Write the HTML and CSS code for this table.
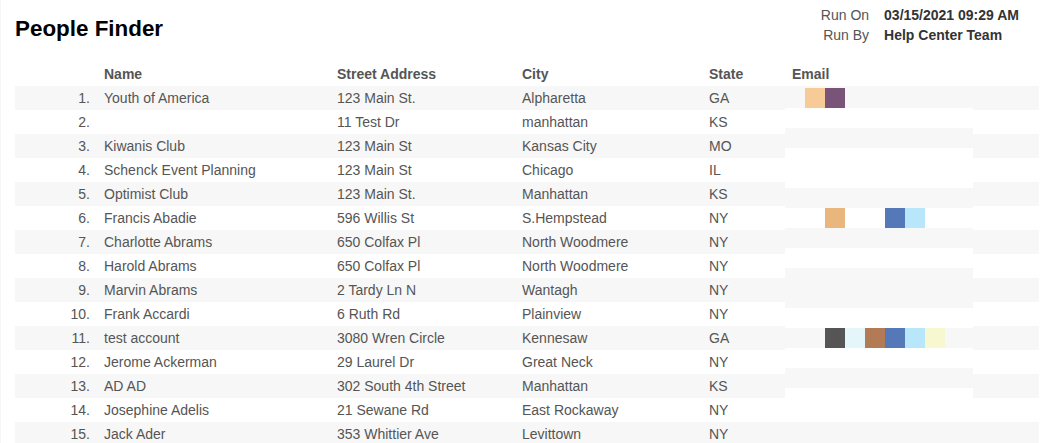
FILE: index.html
```html
<!DOCTYPE html>
<html lang="en">
<head>
<meta charset="utf-8">
<title>People Finder</title>
<link rel="stylesheet" href="styles.css">
</head>
<body>
<div class="page">
  <header class="top">
    <h1 class="title">People Finder</h1>
    <div class="meta">
      <span class="meta-label">Run On</span><span class="meta-value">03/15/2021 09:29 AM</span>
      <span class="meta-label">Run By</span><span class="meta-value">Help Center Team</span>
    </div>
  </header>
  <div class="table">
    <div class="row head"><span></span><span>Name</span><span>Street Address</span><span>City</span><span>State</span><span>Email</span></div>
    <div class="row"><span class="num">1.</span><span>Youth of America</span><span>123 Main St.</span><span>Alpharetta</span><span>GA</span><span></span></div>
    <div class="row"><span class="num">2.</span><span></span><span>11 Test Dr</span><span>manhattan</span><span>KS</span><span></span></div>
    <div class="row"><span class="num">3.</span><span>Kiwanis Club</span><span>123 Main St</span><span>Kansas City</span><span>MO</span><span></span></div>
    <div class="row"><span class="num">4.</span><span>Schenck Event Planning</span><span>123 Main St</span><span>Chicago</span><span>IL</span><span></span></div>
    <div class="row"><span class="num">5.</span><span>Optimist Club</span><span>123 Main St.</span><span>Manhattan</span><span>KS</span><span></span></div>
    <div class="row"><span class="num">6.</span><span>Francis Abadie</span><span>596 Willis St</span><span>S.Hempstead</span><span>NY</span><span></span></div>
    <div class="row"><span class="num">7.</span><span>Charlotte Abrams</span><span>650 Colfax Pl</span><span>North Woodmere</span><span>NY</span><span></span></div>
    <div class="row"><span class="num">8.</span><span>Harold Abrams</span><span>650 Colfax Pl</span><span>North Woodmere</span><span>NY</span><span></span></div>
    <div class="row"><span class="num">9.</span><span>Marvin Abrams</span><span>2 Tardy Ln N</span><span>Wantagh</span><span>NY</span><span></span></div>
    <div class="row"><span class="num">10.</span><span>Frank Accardi</span><span>6 Ruth Rd</span><span>Plainview</span><span>NY</span><span></span></div>
    <div class="row"><span class="num">11.</span><span>test account</span><span>3080 Wren Circle</span><span>Kennesaw</span><span>GA</span><span></span></div>
    <div class="row"><span class="num">12.</span><span>Jerome Ackerman</span><span>29 Laurel Dr</span><span>Great Neck</span><span>NY</span><span></span></div>
    <div class="row"><span class="num">13.</span><span>AD AD</span><span>302 South 4th Street</span><span>Manhattan</span><span>KS</span><span></span></div>
    <div class="row"><span class="num">14.</span><span>Josephine Adelis</span><span>21 Sewane Rd</span><span>East Rockaway</span><span>NY</span><span></span></div>
    <div class="row"><span class="num">15.</span><span>Jack Ader</span><span>353 Whittier Ave</span><span>Levittown</span><span>NY</span><span></span></div>

    <div class="redact" aria-hidden="true">
      <div class="mrow g"><i></i><i class="peach"></i><i class="purple"></i></div>
      <div class="mrow w"></div>
      <div class="mrow g"></div>
      <div class="mrow w"></div>
      <div class="mrow w"></div>
      <div class="mrow g"></div>
      <div class="mrow w"><i></i><i></i><i class="orange"></i><i></i><i></i><i class="blue"></i><i class="lblue"></i></div>
      <div class="mrow g"></div>
      <div class="mrow w"></div>
      <div class="mrow g"></div>
      <div class="mrow g"></div>
      <div class="mrow w"></div>
      <div class="mrow g"><i></i><i></i><i class="dark"></i><i class="cyan"></i><i class="brown"></i><i class="blue"></i><i class="lblue"></i><i class="yellow"></i></div>
      <div class="mrow w"></div>
      <div class="mrow g"></div>
      <div class="mrow w"></div>
      <div class="mrow w short"></div>
    </div>
  </div>
</div>
</body>
</html>
```
FILE: styles.css
```css
html, body {
  margin: 0;
  padding: 0;
  overflow: hidden;
  background: #fff;
}
html {
  background: linear-gradient(to right, #f6f6f6 1px, #fff 1px);
}
body {
  background: transparent;
  font-family: "Liberation Sans", Arial, sans-serif;
  font-size: 14px;
  color: #555;
}
.page {
  padding: 0 10px 0 15px;
}
.top {
  display: flex;
  justify-content: space-between;
  align-items: flex-start;
  height: 63px;
}
.title {
  margin: 16px 0 0 0;
  font-size: 22.4px;
  line-height: 26px;
  font-weight: bold;
  color: #000;
}
.meta {
  margin: 5px 20px 0 0;
  display: grid;
  grid-template-columns: auto auto;
  column-gap: 15px;
  line-height: 20px;
}
.meta-label {
  text-align: right;
  color: #555;
}
.meta-value {
  font-weight: bold;
  color: #333;
}
.table {
  position: relative;
}
.row {
  display: grid;
  grid-template-columns: 89px 233px 185px 187px 83px 1fr;
  height: 24px;
  line-height: 24px;
  white-space: nowrap;
}
.row.head {
  height: 23px;
  line-height: 23px;
  font-weight: bold;
  color: #555;
}
.row:nth-child(even) {
  background: #f7f7f7;
}
.num {
  text-align: right;
  padding-right: 14px;
}
.redact {
  position: absolute;
  left: 770px;
  top: 25px;
  width: 188px;
  overflow: hidden;
}
.mrow {
  display: flex;
  height: 20px;
}
.mrow.short {
  height: 14px;
}
.mrow.g { background: #f7f7f7; }
.mrow.w { background: #fff; }
.mrow i {
  flex: 0 0 20px;
  height: 20px;
}
.peach { background: #f7cb98; }
.purple { background: #7a5478; }
.orange { background: #e9b77d; }
.blue { background: #5578b8; }
.lblue { background: #b8e6fa; }
.dark { background: #555555; }
.cyan { background: #e4f6f9; }
.brown { background: #b27a55; }
.yellow { background: #f7f8d0; }
```
